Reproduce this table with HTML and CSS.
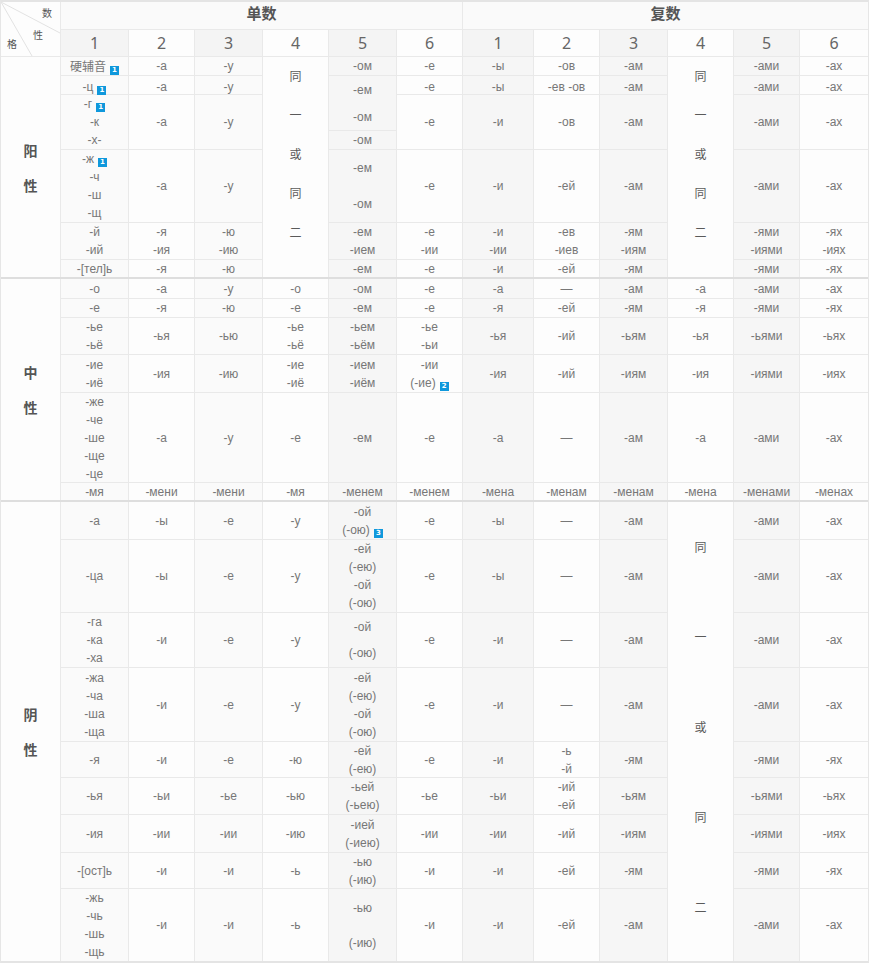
FILE: index.html
```html
<!DOCTYPE html>
<html lang="zh">
<head>
<meta charset="utf-8">
<title>名词变格表</title>
<link rel="stylesheet" href="styles.css">
</head>
<body>
<div class="table">
  <div class="sec head">
    <div class="cell diag r2">
      <svg class="diag-lines" width="59" height="54" viewBox="0 0 59 54"><line x1="0" y1="0" x2="59" y2="31"/><line x1="0" y1="0" x2="31" y2="54"/></svg>
      <span class="lb lb-num">数</span>
      <span class="lb lb-gen">性</span>
      <span class="lb lb-case">格</span>
    </div>
    <div class="cell htitle c6">单数</div>
    <div class="cell htitle c6">复数</div>
    <div class="cell num g">1</div><div class="cell num">2</div><div class="cell num g">3</div><div class="cell num">4</div><div class="cell num g">5</div><div class="cell num">6</div>
    <div class="cell num g">1</div><div class="cell num">2</div><div class="cell num g">3</div><div class="cell num">4</div><div class="cell num g">5</div><div class="cell num">6</div>
  </div>

  <div class="sec masc">
    <div class="cell gen r7"><b>阳</b><b>性</b></div>
    <div class="cell l"><span class="cjk">硬辅音<i class="fn">1</i></span></div>
    <div class="cell">-а</div>
    <div class="cell l">-у</div>
    <div class="cell same r7"><span>同</span><span>一</span><span>或</span><span>同</span><span>二</span></div>
    <div class="cell g">-ом</div>
    <div class="cell">-е</div>
    <div class="cell g">-ы</div>
    <div class="cell">-ов</div>
    <div class="cell g">-ам</div>
    <div class="cell same r7"><span>同</span><span>一</span><span>或</span><span>同</span><span>二</span></div>
    <div class="cell g">-ами</div>
    <div class="cell">-ах</div>

    <div class="cell l low"><span>-ц<i class="fn">1</i></span></div>
    <div class="cell low">-а</div>
    <div class="cell l low">-у</div>
    <div class="cell g r2 gap9"><span>-ем</span><span>-ом</span></div>
    <div class="cell low">-е</div>
    <div class="cell g low">-ы</div>
    <div class="cell low">-ев -ов</div>
    <div class="cell g low">-ам</div>
    <div class="cell g low">-ами</div>
    <div class="cell low">-ах</div>

    <div class="cell l r2"><span>-г<i class="fn">1</i></span><span>-к</span><span>-х-</span></div>
    <div class="cell r2">-а</div>
    <div class="cell l r2">-у</div>
    <div class="cell r2">-е</div>
    <div class="cell g r2">-и</div>
    <div class="cell r2">-ов</div>
    <div class="cell g r2">-ам</div>
    <div class="cell g r2">-ами</div>
    <div class="cell r2">-ах</div>

    <div class="cell g">-ом</div>

    <div class="cell l"><span>-ж<i class="fn">1</i></span><span>-ч</span><span>-ш</span><span>-щ</span></div>
    <div class="cell">-а</div>
    <div class="cell l">-у</div>
    <div class="cell g gap18"><span>-ем</span><span>-ом</span></div>
    <div class="cell">-е</div>
    <div class="cell g">-и</div>
    <div class="cell">-ей</div>
    <div class="cell g">-ам</div>
    <div class="cell g">-ами</div>
    <div class="cell">-ах</div>

    <div class="cell l"><span>-й</span><span>-ий</span></div>
    <div class="cell"><span>-я</span><span>-ия</span></div>
    <div class="cell l"><span>-ю</span><span>-ию</span></div>
    <div class="cell g"><span>-ем</span><span>-ием</span></div>
    <div class="cell"><span>-е</span><span>-ии</span></div>
    <div class="cell g"><span>-и</span><span>-ии</span></div>
    <div class="cell"><span>-ев</span><span>-иев</span></div>
    <div class="cell g"><span>-ям</span><span>-иям</span></div>
    <div class="cell g"><span>-ями</span><span>-иями</span></div>
    <div class="cell"><span>-ях</span><span>-иях</span></div>

    <div class="cell l">-[тел]ь</div>
    <div class="cell">-я</div>
    <div class="cell l">-ю</div>
    <div class="cell g">-ем</div>
    <div class="cell">-е</div>
    <div class="cell g">-и</div>
    <div class="cell">-ей</div>
    <div class="cell g">-ям</div>
    <div class="cell g">-ями</div>
    <div class="cell">-ях</div>
  </div>

  <div class="sec neut">
    <div class="cell gen r6"><b>中</b><b>性</b></div>
    <div class="cell l">-о</div><div class="cell">-а</div><div class="cell l">-у</div><div class="cell">-о</div><div class="cell g">-ом</div><div class="cell">-е</div>
    <div class="cell g">-а</div><div class="cell">—</div><div class="cell g">-ам</div><div class="cell">-а</div><div class="cell g">-ами</div><div class="cell">-ах</div>

    <div class="cell l">-е</div><div class="cell">-я</div><div class="cell l">-ю</div><div class="cell">-е</div><div class="cell g">-ем</div><div class="cell">-е</div>
    <div class="cell g">-я</div><div class="cell">-ей</div><div class="cell g">-ям</div><div class="cell">-я</div><div class="cell g">-ями</div><div class="cell">-ях</div>

    <div class="cell l"><span>-ье</span><span>-ьё</span></div><div class="cell">-ья</div><div class="cell l">-ью</div><div class="cell"><span>-ье</span><span>-ьё</span></div><div class="cell g"><span>-ьем</span><span>-ьём</span></div><div class="cell"><span>-ье</span><span>-ьи</span></div>
    <div class="cell g">-ья</div><div class="cell">-ий</div><div class="cell g">-ьям</div><div class="cell">-ья</div><div class="cell g">-ьями</div><div class="cell">-ьях</div>

    <div class="cell l"><span>-ие</span><span>-иё</span></div><div class="cell">-ия</div><div class="cell l">-ию</div><div class="cell"><span>-ие</span><span>-иё</span></div><div class="cell g"><span>-ием</span><span>-иём</span></div><div class="cell"><span>-ии</span><span>(-ие)<i class="fn">2</i></span></div>
    <div class="cell g">-ия</div><div class="cell">-ий</div><div class="cell g">-иям</div><div class="cell">-ия</div><div class="cell g">-иями</div><div class="cell">-иях</div>

    <div class="cell l"><span>-же</span><span>-че</span><span>-ше</span><span>-ще</span><span>-це</span></div><div class="cell">-а</div><div class="cell l">-у</div><div class="cell">-е</div><div class="cell g">-ем</div><div class="cell">-е</div>
    <div class="cell g">-а</div><div class="cell">—</div><div class="cell g">-ам</div><div class="cell">-а</div><div class="cell g">-ами</div><div class="cell">-ах</div>

    <div class="cell l">-мя</div><div class="cell">-мени</div><div class="cell l">-мени</div><div class="cell">-мя</div><div class="cell g">-менем</div><div class="cell">-менем</div>
    <div class="cell g">-мена</div><div class="cell">-менам</div><div class="cell g">-менам</div><div class="cell">-мена</div><div class="cell g">-менами</div><div class="cell">-менах</div>
  </div>

  <div class="sec fem">
    <div class="cell gen r9"><b>阴</b><b>性</b></div>
    <div class="cell l">-а</div><div class="cell">-ы</div><div class="cell l">-е</div><div class="cell">-у</div><div class="cell g"><span>-ой</span><span>(-ою)<i class="fn">3</i></span></div><div class="cell">-е</div>
    <div class="cell g">-ы</div><div class="cell">—</div><div class="cell g">-ам</div>
    <div class="cell same fsame r9"><span>同</span><span>一</span><span>或</span><span>同</span><span>二</span></div>
    <div class="cell g">-ами</div><div class="cell">-ах</div>

    <div class="cell l">-ца</div><div class="cell">-ы</div><div class="cell l">-е</div><div class="cell">-у</div><div class="cell g"><span>-ей</span><span>(-ею)</span><span>-ой</span><span>(-ою)</span></div><div class="cell">-е</div>
    <div class="cell g">-ы</div><div class="cell">—</div><div class="cell g">-ам</div><div class="cell g">-ами</div><div class="cell">-ах</div>

    <div class="cell l"><span>-га</span><span>-ка</span><span>-ха</span></div><div class="cell">-и</div><div class="cell l">-е</div><div class="cell">-у</div><div class="cell g gap8"><span>-ой</span><span>(-ою)</span></div><div class="cell">-е</div>
    <div class="cell g">-и</div><div class="cell">—</div><div class="cell g">-ам</div><div class="cell g">-ами</div><div class="cell">-ах</div>

    <div class="cell l"><span>-жа</span><span>-ча</span><span>-ша</span><span>-ща</span></div><div class="cell">-и</div><div class="cell l">-е</div><div class="cell">-у</div><div class="cell g"><span>-ей</span><span>(-ею)</span><span>-ой</span><span>(-ою)</span></div><div class="cell">-е</div>
    <div class="cell g">-и</div><div class="cell">—</div><div class="cell g">-ам</div><div class="cell g">-ами</div><div class="cell">-ах</div>

    <div class="cell l">-я</div><div class="cell">-и</div><div class="cell l">-е</div><div class="cell">-ю</div><div class="cell g"><span>-ей</span><span>(-ею)</span></div><div class="cell">-е</div>
    <div class="cell g">-и</div><div class="cell"><span>-ь</span><span>-й</span></div><div class="cell g">-ям</div><div class="cell g">-ями</div><div class="cell">-ях</div>

    <div class="cell l">-ья</div><div class="cell">-ьи</div><div class="cell l">-ье</div><div class="cell">-ью</div><div class="cell g"><span>-ьей</span><span>(-ьею)</span></div><div class="cell">-ье</div>
    <div class="cell g">-ьи</div><div class="cell"><span>-ий</span><span>-ей</span></div><div class="cell g">-ьям</div><div class="cell g">-ьями</div><div class="cell">-ьях</div>

    <div class="cell l">-ия</div><div class="cell">-ии</div><div class="cell l">-ии</div><div class="cell">-ию</div><div class="cell g"><span>-ией</span><span>(-иею)</span></div><div class="cell">-ии</div>
    <div class="cell g">-ии</div><div class="cell">-ий</div><div class="cell g">-иям</div><div class="cell g">-иями</div><div class="cell">-иях</div>

    <div class="cell l">-[ост]ь</div><div class="cell">-и</div><div class="cell l">-и</div><div class="cell">-ь</div><div class="cell g"><span>-ью</span><span>(-ию)</span></div><div class="cell">-и</div>
    <div class="cell g">-и</div><div class="cell">-ей</div><div class="cell g">-ям</div><div class="cell g">-ями</div><div class="cell">-ях</div>

    <div class="cell l"><span>-жь</span><span>-чь</span><span>-шь</span><span>-щь</span></div><div class="cell">-и</div><div class="cell l">-и</div><div class="cell">-ь</div><div class="cell g gap17"><span>-ью</span><span>(-ию)</span></div><div class="cell">-и</div>
    <div class="cell g">-и</div><div class="cell">-ей</div><div class="cell g">-ам</div><div class="cell g">-ами</div><div class="cell">-ах</div>
  </div>
</div>
</body>
</html>
```
FILE: styles.css
```css
html, body {
  margin: 0;
  padding: 0;
  background: #ffffff;
}

body {
  font-family: "Liberation Sans", "Noto Sans CJK SC", sans-serif;
  color: #777777;
}

.table {
  width: 867px;
  border-left: 1px solid #e6e6e6;
  border-right: 1px solid #e6e6e6;
  border-top: 2px solid #e4e4e4;
  border-bottom: 2px solid #e4e4e4;
}

.sec {
  display: grid;
  grid-template-columns: 59px 67px 65px 67px 65px 67px 65px 70px 65px 67px 65px 65px 68px;
  gap: 1px;
  background: #e9e9e9;
}

.head { grid-template-rows: 27px 26px; }
.masc {
  border-top: 1px solid #e9e9e9;
  grid-template-rows: 18px 18px 35px 18px 72px 36px 17px;
}
.neut {
  border-top: 2px solid #dedede;
  grid-template-rows: 19px 18px 36px 37px 89px 17px;
}
.fem {
  border-top: 2px solid #dedede;
  grid-template-rows: 37px 72px 54px 73px 35px 36px 37px 35px 72px;
}

.cell {
  background: #fdfdfd;
  display: flex;
  flex-direction: column;
  align-items: center;
  justify-content: center;
  font-size: 12px;
  line-height: 18px;
  text-align: center;
  white-space: nowrap;
}

.cell.g { background: #f6f6f6; }
.cell.l { background: #fafafa; }

.r2 { grid-row: span 2; }
.r6 { grid-row: span 6; }
.r7 { grid-row: span 7; }
.r9 { grid-row: span 9; }
.c6 { grid-column: span 6; }

.gap8 { gap: 8px; }
.gap9 { gap: 9px; }
.gap17 { gap: 17px; }
.gap18 { gap: 18px; }

.low { padding-top: 3px; box-sizing: border-box; }

.cjk { font-family: "Noto Sans CJK SC", sans-serif; }

.fn {
  display: inline-block;
  width: 9px;
  height: 9px;
  margin-left: 4px;
  background: #0f98dc;
  color: #ffffff;
  font-family: "DejaVu Sans", sans-serif;
  font-style: normal;
  font-weight: bold;
  font-size: 7px;
  line-height: 9px;
  text-align: center;
  vertical-align: -1px;
}

/* header */
.diag {
  position: relative;
  background: #fdfdfd;
}
.diag-lines {
  position: absolute;
  left: 0;
  top: 0;
}
.diag-lines line {
  stroke: #e2e2e2;
  stroke-width: 1;
}
.lb {
  position: absolute;
  font-family: "Noto Sans CJK SC", sans-serif;
  font-size: 10px;
  line-height: 12px;
  color: #555555;
}
.lb-num { left: 41px; top: 5px; }
.lb-gen { left: 32px; top: 27px; }
.lb-case { left: 6px; top: 36px; }

.htitle {
  background: #fafafa;
  font-family: "Noto Sans CJK SC", sans-serif;
  font-size: 15px;
  font-weight: bold;
  color: #555555;
  padding-bottom: 5px;
  box-sizing: border-box;
}

.num {
  font-family: "Noto Sans", sans-serif;
  font-size: 16px;
  color: #666666;
  background: #fdfdfd;
}
.num.g { background: #f4f4f4; }

/* gender labels */
.gen {
  background: #fdfdfd;
  gap: 17px;
  font-family: "Noto Sans CJK SC", sans-serif;
  font-size: 14px;
  color: #555555;
}
.gen b { font-weight: bold; }

/* "同一或同二" column */
.same {
  background: #fdfdfd;
  justify-content: flex-start;
  padding-top: 10px;
  gap: 21px;
  box-sizing: border-box;
  font-family: "Noto Sans CJK SC", sans-serif;
  font-size: 12px;
  color: #5a5a5a;
}
.same.fsame {
  padding-top: 36px;
  gap: 72px;
}
```
